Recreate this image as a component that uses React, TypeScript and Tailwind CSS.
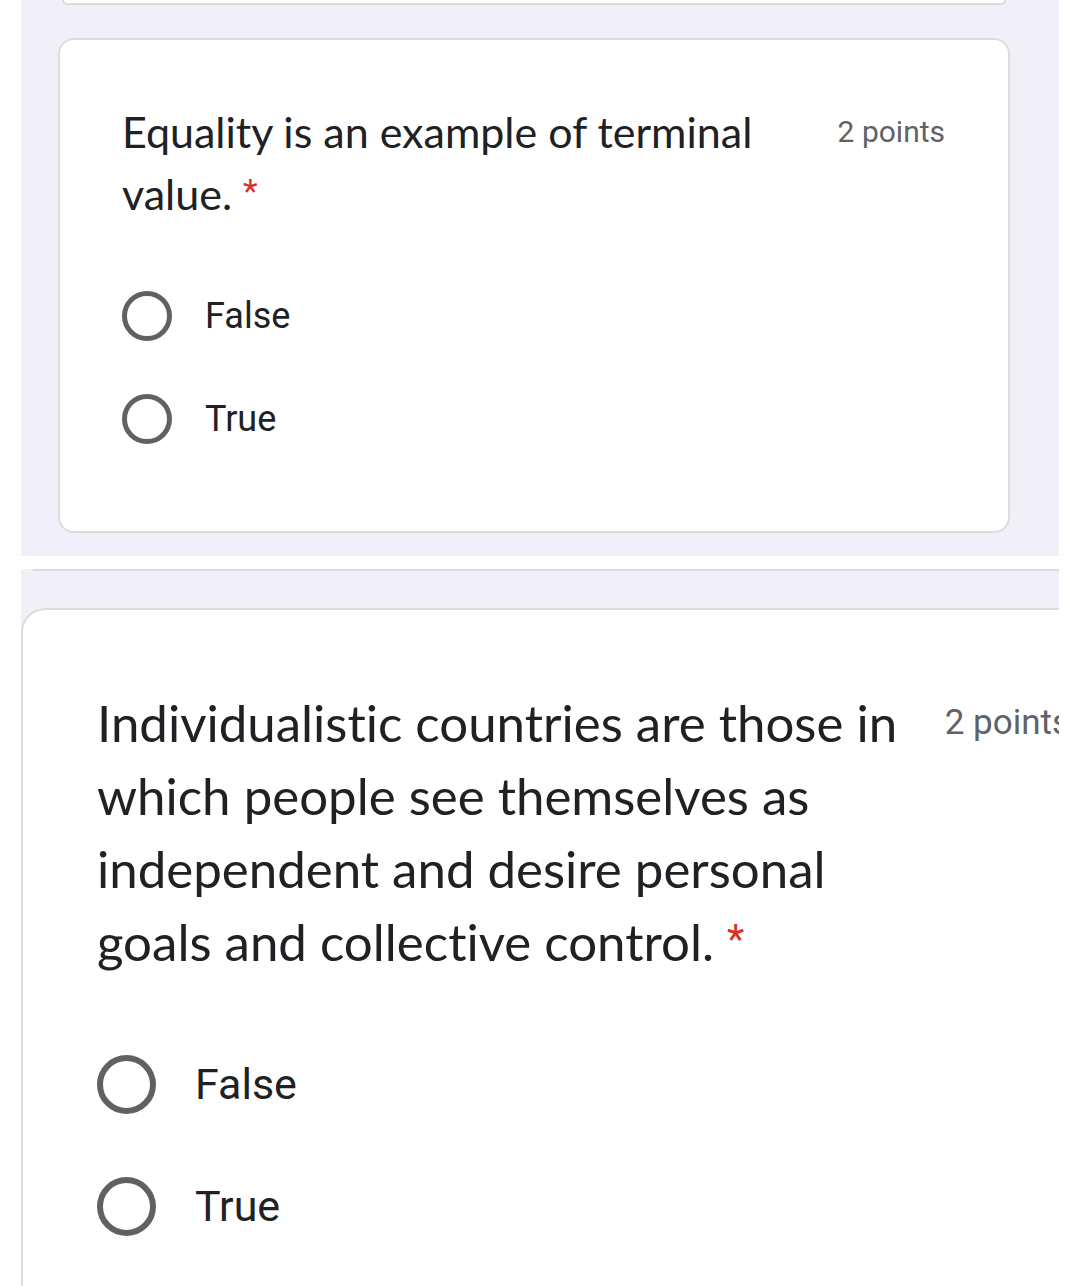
import React from "react";

const titleFont = { fontFamily: "Lato, 'Open Sans', sans-serif" };
const starFont = { fontFamily: "Roboto, sans-serif" };

function Radio({ size }: { size: "sm" | "lg" }) {
  return size === "sm" ? (
    <div className="w-[50px] h-[50px] rounded-full border-[5px] border-[#616161] shrink-0" />
  ) : (
    <div className="w-[59px] h-[59px] rounded-full border-[6px] border-[#616161] shrink-0" />
  );
}

export default function App() {
  return (
    <div className="w-[1080px] h-[1286px] bg-white overflow-hidden font-['Roboto',sans-serif]">
      <div className="ml-[21px] w-[1038px] flex flex-col">
        {/* top panel */}
        <div className="bg-[#f1f0f9] h-[556px] pl-[37px] pr-[49px] flex flex-col">
          <div className="h-[5px] bg-white border-x-2 border-b-2 border-[#dcdce0] rounded-b-[16px] mx-[4px]" />
          <div className="mt-[33px] h-[495px] bg-white border-2 border-[#dcdce0] rounded-[16px] pt-[61px] pl-[62px] pr-[63px] flex flex-col">
            <div className="flex items-start">
              <div
                className="w-[690px] text-[43px] leading-[62px] text-[#202124] [font-variant-ligatures:none]"
                style={titleFont}
              >
                Equality is an example of terminal value.{" "}
                <span className="text-[#d93025] text-[34px] relative top-[-7px]" style={starFont}>*</span>
              </div>
              <div className="ml-auto text-[30px] leading-[62px] text-[#5f6368]">2 points</div>
            </div>
            <div className="mt-[62px] flex flex-col gap-[53px]">
              <div className="flex items-center gap-[33px]">
                <Radio size="sm" />
                <span className="text-[36px] text-[#202124] leading-[50px]">False</span>
              </div>
              <div className="flex items-center gap-[33px]">
                <Radio size="sm" />
                <span className="text-[36px] text-[#202124] leading-[50px]">True</span>
              </div>
            </div>
          </div>
        </div>

        {/* second panel */}
        <div className="mt-[13px] bg-[#f1f0f9] overflow-hidden flex flex-col">
          <div className="h-[39px] border-t-2 border-[#dcdce0] ml-[12px]" />
          <div className="w-[1126px] h-[700px] bg-white border-l-2 border-t-2 border-[#dcdce0] rounded-tl-[24px] pt-[76px] pl-[74px] pr-[77px] flex flex-col">
            <div className="flex items-start">
              <div
                className="w-[830px] text-[51px] leading-[73px] text-[#202124] [font-variant-ligatures:none]"
                style={titleFont}
              >
                Individualistic countries are those in which people see themselves as independent and desire personal goals and collective control.{" "}
                <span className="text-[#d93025] text-[40px] relative top-[-8px]" style={starFont}>*</span>
              </div>
              <div className="ml-auto text-[35px] leading-[73px] text-[#5f6368]">2 points</div>
            </div>
            <div className="mt-[71px] flex flex-col gap-[63px]">
              <div className="flex items-center gap-[39px]">
                <Radio size="lg" />
                <span className="text-[43px] text-[#202124] leading-[59px]">False</span>
              </div>
              <div className="flex items-center gap-[39px]">
                <Radio size="lg" />
                <span className="text-[43px] text-[#202124] leading-[59px]">True</span>
              </div>
            </div>
          </div>
        </div>
      </div>
    </div>
  );
}
